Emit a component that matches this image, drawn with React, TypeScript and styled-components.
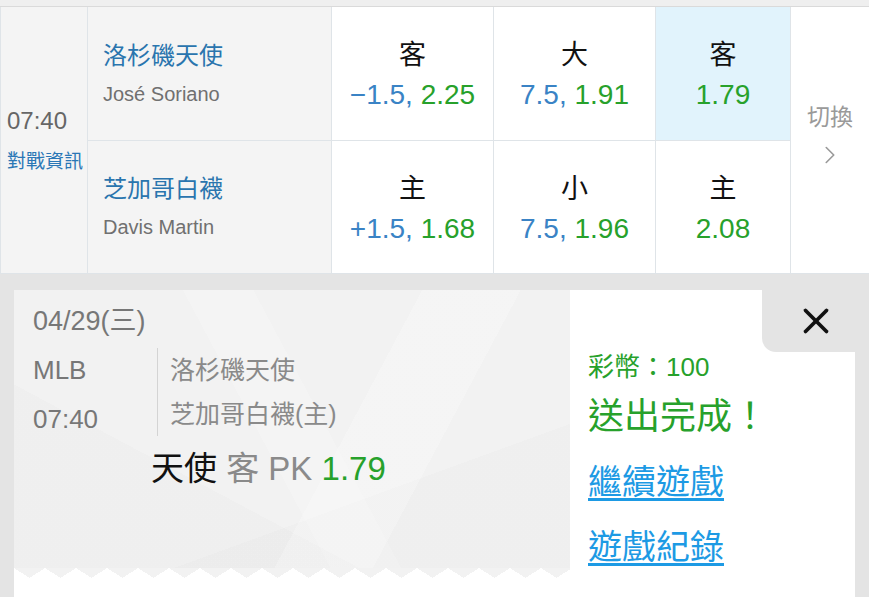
import React from 'react';
import styled, { createGlobalStyle } from 'styled-components';
import { ChevronRight, X } from 'lucide-react';

const GlobalStyle = createGlobalStyle`
  html, body {
    margin: 0;
    padding: 0;
  }
  body {
    width: 869px;
    height: 597px;
    overflow: hidden;
    background: #e4e4e4;
    font-family: 'Liberation Sans', 'Noto Sans CJK TC', sans-serif;
  }
  * {
    box-sizing: border-box;
  }
`;

const TopStrip = styled.div`
  height: 7px;
  background: #efefef;
  border-bottom: 1px solid #dadada;
`;

const Board = styled.div`
  display: grid;
  grid-template-columns: 86px 243px 161px 161px 134px 1fr;
  grid-template-rows: 133px 132px;
  gap: 1px;
  padding: 0 0 1px 1px;
  background: #dfe4e8;
`;

const TimeCell = styled.div`
  grid-row: span 2;
  background: #f4f4f4;
  display: flex;
  flex-direction: column;
  justify-content: center;
  gap: 14px;
  padding-left: 6px;
`;

const KickOff = styled.div`
  font-size: 24px;
  line-height: 30px;
  color: #666;
`;

const MatchInfo = styled.div`
  font-size: 19px;
  line-height: 24px;
  color: #2a77b6;
`;

const TeamCell = styled.div`
  background: #f4f4f4;
  display: flex;
  flex-direction: column;
  justify-content: center;
  gap: 8px;
  padding-left: 15px;
`;

const TeamName = styled.div`
  font-size: 24px;
  line-height: 32px;
  color: #2a75ae;
`;

const Pitcher = styled.div`
  font-size: 20px;
  line-height: 28px;
  color: #707070;
`;

const OddsCell = styled.div<{ $active?: boolean }>`
  background: ${(p) => (p.$active ? '#e1f3fc' : '#ffffff')};
  display: flex;
  flex-direction: column;
  align-items: center;
  justify-content: center;
  gap: 5px;
  padding-top: 4px;
`;

const PickLabel = styled.div`
  font-size: 27px;
  line-height: 34px;
  color: #111;
`;

const OddsLine = styled.div`
  font-size: 28px;
  line-height: 36px;
  white-space: nowrap;
`;

const Line = styled.span`
  color: #3a83c5;
`;

const Price = styled.span`
  color: #27a12b;
`;

const SwitchCell = styled.div`
  grid-column: 6;
  grid-row: 1 / span 2;
  background: #fff;
  display: flex;
  flex-direction: column;
  align-items: center;
  justify-content: center;
  gap: 8px;
  padding-bottom: 8px;
  color: #9a9a9a;
`;

const SwitchText = styled.div`
  font-size: 23px;
  line-height: 30px;
`;

const Ticket = styled.div`
  position: relative;
  display: flex;
  width: 841px;
  height: 330px;
  margin: 16px 0 0 14px;
  background: #fff;
`;

const LeftPane = styled.div`
  width: 556px;
  display: flex;
  flex-direction: column;
`;

const Stub = styled.div`
  height: 278px;
  padding: 14px 0 0 19px;
  background:
    linear-gradient(118deg, transparent 0 58%, rgba(255, 255, 255, 0.22) 58% 72%, transparent 72%),
    linear-gradient(28deg, rgba(0, 0, 0, 0.012) 0 32%, transparent 32%),
    linear-gradient(160deg, transparent 0 70%, rgba(0, 0, 0, 0.01) 70%),
    linear-gradient(62deg, transparent 0 45%, rgba(255, 255, 255, 0.18) 45% 55%, transparent 55%),
    #f2f2f2;
`;

const Teeth = styled.div`
  height: 10px;
  background: conic-gradient(from -57deg at 50% 100%, #f2f2f2 114deg, transparent 0) 0 0 / 31px 10px repeat-x;
`;

const DateLine = styled.div`
  font-size: 27px;
  line-height: 34px;
  color: #777;
`;

const MatchBlock = styled.div`
  display: flex;
  align-items: flex-start;
  margin-top: 10px;
`;

const LeagueCol = styled.div`
  width: 124px;
  margin: -2px 0 -10px;
  font-size: 26px;
  line-height: 49px;
  color: #777;
`;

const TeamsCol = styled.div`
  border-left: 1px solid #d4d4d4;
  padding-left: 12px;
  font-size: 25px;
  line-height: 44px;
  color: #8a8a8a;
`;

const PickLine = styled.div`
  margin: 13px 0 0 118px;
  font-size: 33px;
  line-height: 40px;
  white-space: pre;
`;

const PickTeam = styled.span`
  color: #111;
`;

const PickSide = styled.span`
  color: #8a8a8a;
`;

const RightPane = styled.div`
  flex: 1;
  display: flex;
  flex-direction: column;
  align-items: flex-start;
  padding: 59px 0 0 18px;
`;

const Credit = styled.div`
  font-size: 26px;
  line-height: 36px;
  color: #27a12b;
`;

const Done = styled.div`
  margin-top: 9px;
  font-size: 36px;
  line-height: 46px;
  color: #27a12b;
`;

const GameLink = styled.a`
  margin-top: 19px;
  font-size: 34px;
  line-height: 46px;
  color: #1d9ae4;
  text-decoration: underline;
  text-underline-offset: 4px;
`;

const CloseTab = styled.button`
  position: absolute;
  top: 0;
  right: 0;
  width: 93px;
  height: 62px;
  padding: 0 0 0 14px;
  border: none;
  background: #e4e4e4;
  border-bottom-left-radius: 14px;
  display: flex;
  align-items: center;
  justify-content: center;
  color: #111;
`;

const rows = [
  {
    team: '洛杉磯天使',
    pitcher: 'José Soriano',
    spread: { side: '客', line: '−1.5,', price: '2.25' },
    total: { side: '大', line: '7.5,', price: '1.91' },
    money: { side: '客', price: '1.79', active: true },
  },
  {
    team: '芝加哥白襪',
    pitcher: 'Davis Martin',
    spread: { side: '主', line: '+1.5,', price: '1.68' },
    total: { side: '小', line: '7.5,', price: '1.96' },
    money: { side: '主', price: '2.08', active: false },
  },
];

const App = () => {
  return (
    <>
      <GlobalStyle />
      <TopStrip />
      <Board>
        <TimeCell>
          <KickOff>07:40</KickOff>
          <MatchInfo>對戰資訊</MatchInfo>
        </TimeCell>
        {rows.map((row, i) => (
          <React.Fragment key={row.team}>
            <TeamCell>
              <TeamName>{row.team}</TeamName>
              <Pitcher>{row.pitcher}</Pitcher>
            </TeamCell>
            <OddsCell>
              <PickLabel>{row.spread.side}</PickLabel>
              <OddsLine>
                <Line>{row.spread.line}</Line> <Price>{row.spread.price}</Price>
              </OddsLine>
            </OddsCell>
            <OddsCell>
              <PickLabel>{row.total.side}</PickLabel>
              <OddsLine>
                <Line>{row.total.line}</Line> <Price>{row.total.price}</Price>
              </OddsLine>
            </OddsCell>
            <OddsCell $active={row.money.active}>
              <PickLabel>{row.money.side}</PickLabel>
              <OddsLine>
                <Price>{row.money.price}</Price>
              </OddsLine>
            </OddsCell>
            {i === 0 && (
              <SwitchCell>
                <SwitchText>切換</SwitchText>
                <ChevronRight size={30} strokeWidth={1.3} />
              </SwitchCell>
            )}
          </React.Fragment>
        ))}
      </Board>

      <Ticket>
        <LeftPane>
          <Stub>
            <DateLine>04/29(三)</DateLine>
            <MatchBlock>
              <LeagueCol>
                <div>MLB</div>
                <div>07:40</div>
              </LeagueCol>
              <TeamsCol>
                <div>洛杉磯天使</div>
                <div>芝加哥白襪(主)</div>
              </TeamsCol>
            </MatchBlock>
            <PickLine>
              <PickTeam>天使</PickTeam> <PickSide>客 PK</PickSide> <Price>1.79</Price>
            </PickLine>
          </Stub>
          <Teeth />
        </LeftPane>
        <RightPane>
          <Credit>彩幣：100</Credit>
          <Done>送出完成！</Done>
          <GameLink href="#">繼續遊戲</GameLink>
          <GameLink href="#">遊戲紀錄</GameLink>
        </RightPane>
        <CloseTab>
          <X size={42} strokeWidth={2.1} />
        </CloseTab>
      </Ticket>
    </>
  );
};

export default App;
